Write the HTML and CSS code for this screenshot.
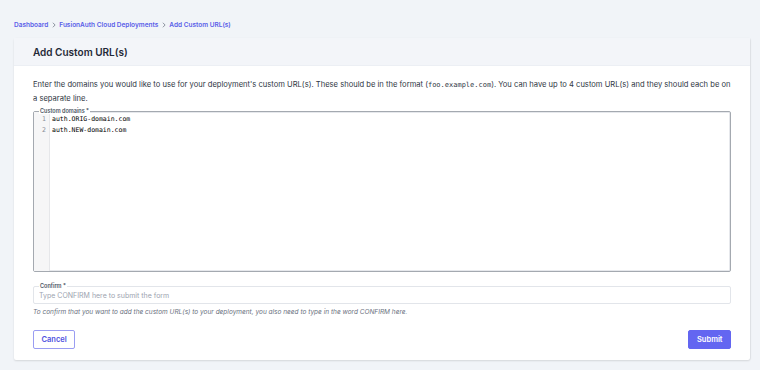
FILE: index.html
```html
<!DOCTYPE html>
<html lang="en">
<head>
    <meta charset="UTF-8">
    <meta name="viewport" content="width=device-width, initial-scale=1.0">
    <title>Add Custom URL(s)</title>
    <link rel="stylesheet" href="styles.css">
</head>
<body>
    <!-- Breadcrumb trail -->
    <nav class="breadcrumb">
        <a href="#">Dashboard</a>
        <span class="crumb-sep">
            <svg viewBox="0 0 8 8" width="6" height="6"><path d="M2.5 1 L5.5 4 L2.5 7" fill="none" stroke="#6b7280" stroke-width="1"/></svg>
        </span>
        <a href="#">FusionAuth Cloud Deployments</a>
        <span class="crumb-sep">
            <svg viewBox="0 0 8 8" width="6" height="6"><path d="M2.5 1 L5.5 4 L2.5 7" fill="none" stroke="#6b7280" stroke-width="1"/></svg>
        </span>
        <a href="#">Add Custom URL(s)</a>
    </nav>

    <!-- Main form card -->
    <section class="panel">
        <header class="panel-header">
            <h1 class="panel-title">Add Custom URL(s)</h1>
        </header>

        <form class="panel-body">
            <p class="intro">Enter the domains you would like to use for your deployment's custom URL(s). These should be in the format (<code>foo.example.com</code>). You can have up to 4 custom URL(s) and they should each be on a separate line.</p>

            <div class="field field-editor">
                <label class="field-label">Custom domains *</label>
                <div class="gutter">
                    <span>1</span>
                    <span>2</span>
                </div>
                <div class="code">
                    <span>auth.ORIG-domain.com</span>
                    <span>auth.NEW-domain.com</span>
                </div>
            </div>

            <div class="field field-confirm">
                <label class="field-label" for="confirm">Confirm *</label>
                <input type="text" id="confirm" class="confirm-input" placeholder="Type CONFIRM here to submit the form">
            </div>
            <p class="help">To confirm that you want to add the custom URL(s) to your deployment, you also need to type in the word CONFIRM here.</p>

            <div class="actions">
                <button type="button" class="btn btn-outline">Cancel</button>
                <button type="submit" class="btn btn-primary">Submit</button>
            </div>
        </form>
    </section>
</body>
</html>
```

FILE: styles.css
```css
/* Reset and base */
* {
    margin: 0;
    padding: 0;
    box-sizing: border-box;
}

body {
    font-family: Inter, 'Noto Sans', sans-serif;
    color: #374151;
    background-color: #f1f4f8;
    padding: 20px 10px 10px 14px;
}

/* Breadcrumb */
.breadcrumb {
    display: flex;
    align-items: center;
    gap: 2.5px;
    font-size: 6.5px;
    font-weight: 600;
    line-height: 10px;
    margin-bottom: 8px;
}

.breadcrumb a {
    color: #5a5ee8;
    text-decoration: none;
}

.crumb-sep {
    display: flex;
    align-items: center;
}

/* Card */
.panel {
    width: 736px;
    background: #ffffff;
    border-radius: 2px;
    box-shadow: 0 1px 2px rgba(0, 0, 0, 0.12), 1px 0 1px rgba(0, 0, 0, 0.05);
}

.panel-header {
    height: 28px;
    display: flex;
    align-items: center;
    padding: 0 19px;
    background: #f3f5f9;
    border-bottom: 1px solid #eceff4;
}

.panel-title {
    font-size: 10px;
    font-weight: 600;
    color: #1f2937;
}

.panel-body {
    padding: 12px 19px 11px;
    display: flex;
    flex-direction: column;
}

.intro {
    font-size: 7.6px;
    line-height: 13px;
    color: #2f3744;
}

.intro code {
    font-family: 'DejaVu Sans Mono', monospace;
    font-size: 7px;
}

/* Outlined fields with a label sitting on the top border */
.field {
    position: relative;
    border: 1px solid #e2e5ea;
    border-radius: 2px;
}

.field-label {
    position: absolute;
    top: -4px;
    left: 5px;
    padding: 0 1px;
    background: #ffffff;
    font-size: 5.5px;
    font-weight: 600;
    line-height: 6px;
    color: #4b5563;
}

.field-editor {
    margin-top: 6px;
    height: 161px;
    display: flex;
    border-color: #a4a9b0;
    box-shadow: inset 0 0 0 1px #e6e8ec;
}

.gutter {
    width: 16px;
    background: #f6f6f7;
    border-right: 1px solid #e6e7ea;
    display: flex;
    flex-direction: column;
    align-items: flex-end;
    padding: 2px 3px 0 0;
    font-family: 'DejaVu Sans Mono', monospace;
    font-size: 6.5px;
    line-height: 11px;
    color: #8a8f98;
}

.code {
    flex: 1;
    display: flex;
    flex-direction: column;
    padding: 2px 0 0 2px;
    font-family: 'DejaVu Sans Mono', monospace;
    font-size: 6.5px;
    line-height: 11px;
    color: #000000;
}

.field-confirm {
    margin-top: 14px;
    height: 18px;
    display: flex;
    align-items: center;
}

.confirm-input {
    width: 100%;
    border: none;
    outline: none;
    background: transparent;
    padding: 1px 5px 0;
    font-family: Inter, 'Noto Sans', sans-serif;
    font-size: 7px;
    line-height: 10px;
    color: #374151;
}

.confirm-input::placeholder {
    color: #9ca3af;
}

.help {
    margin-top: 3px;
    font-size: 6.5px;
    font-style: italic;
    line-height: 10px;
    color: #6b7280;
}

/* Buttons */
.actions {
    display: flex;
    justify-content: space-between;
    margin-top: 13px;
}

.btn {
    height: 19px;
    padding: 0 7.5px;
    border-radius: 2px;
    font-family: Inter, 'Noto Sans', sans-serif;
    font-size: 7.5px;
    font-weight: 600;
    cursor: pointer;
}

.btn-outline {
    background: #ffffff;
    color: #4f52e0;
    border: 1px solid #9a9df2;
}

.btn-primary {
    background: #6366f1;
    color: #ffffff;
    border: 1px solid #6366f1;
}
```
